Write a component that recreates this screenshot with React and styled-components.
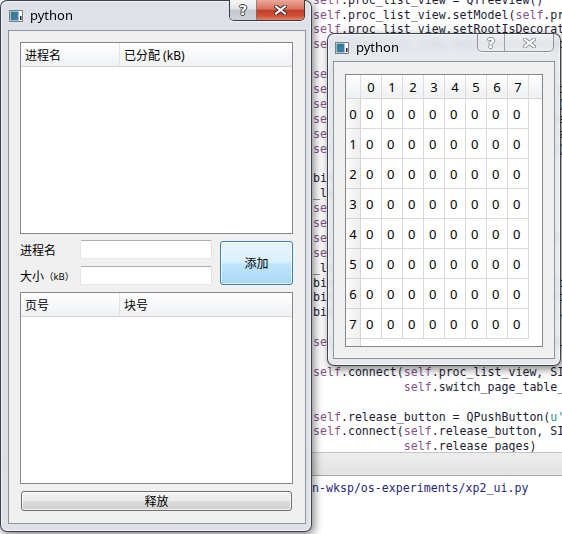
import React from "react";
import styled, { createGlobalStyle } from "styled-components";

const GlobalStyle = createGlobalStyle`
  *, *::before, *::after { box-sizing: border-box; }
  html, body { margin: 0; padding: 0; }
  body {
    width: 562px;
    height: 534px;
    overflow: hidden;
    background: #fff;
    font-family: "Noto Sans", "Noto Sans CJK SC", sans-serif;
  }
`;

const Desktop = styled.div`
  position: relative;
  width: 562px;
  height: 534px;
  overflow: hidden;
  background: #fff;
`;

/* ---------- editor behind the windows ---------- */

const Editor = styled.div`
  display: flex;
  flex-direction: column;
  height: 100%;
  font-family: "DejaVu Sans Mono", "Liberation Mono", monospace;
  font-size: 11.6px;
  color: #1c1c34;
`;

const CodeArea = styled.div`
  height: 452px;
  overflow: hidden;
  background: #fff;
`;

const CodeLines = styled.div`
  margin-top: -7.4px;
  padding-left: 313px;
`;

const Line = styled.div`
  height: 14.9px;
  line-height: 14.9px;
  white-space: pre;
`;

const Self = styled.span`
  color: #86548c;
`;

const Str = styled.span`
  color: #1f8f8c;
`;

const StatusBar = styled.div`
  height: 24px;
  background: linear-gradient(#ededed, #e3e3e3);
  border-top: 1px solid #c4c4c4;
  border-bottom: 1px solid #a6a6a6;
`;

const PathPane = styled.div`
  flex: 1;
  padding: 5px 0 0 312px;
  line-height: 15px;
  color: #26267c;
  white-space: pre;
  background: #fff;
`;

const CODE = [
  "self.proc_list_view = QTreeView()",
  "self.proc_list_view.setModel(self.proc_list_model)",
  "self.proc_list_view.setRootIsDecorated(False)",
  "self.proc_list_view.setItemsExpandable(False)",
  "",
  "self.page_table_view = QTableView()",
  "self.page_table_view.setModel(self.page_table_model)",
  "self.page_table_view.verticalHeader().setDefaultSectionSize(30)",
  "self.page_table_view.horizontalHeader().setDefaultSectionSize(21)",
  "self.page_table_view.setEditTriggers(QAbstractItemView.NoEditTriggers)",
  "self.page_table_view.setWindowTitle('python')",
  "",
  "bind_layout = QGridLayout()",
  "_layout = QHBoxLayout()",
  "self.name_edit = QLineEdit()",
  "self.size_edit = QLineEdit()",
  "self.add_button = QPushButton(u'添加')",
  "self.page_list_view = QTreeView()",
  "_layout.addWidget(self.add_button)",
  "bind_layout.addWidget(self.name_edit, 0, 1)",
  "bind_layout.addWidget(self.size_edit, 1, 1)",
  "bind_layout.addLayout(_layout, 0, 2, 2, 1)",
  "",
  "self.connect(self.add_button, SIGNAL('clicked()'), self.add_proc)",
  "",
  "self.connect(self.proc_list_view, SIGNAL('clicked(QModelIndex)'),",
  "             self.switch_page_table_view)",
  "",
  "self.release_button = QPushButton(u'释放')",
  "self.connect(self.release_button, SIGNAL('clicked()'),",
  "             self.release_pages)",
  "",
];

function renderCode(text) {
  return text.split(/(self|u'[^']*')/).map((part, i) => {
    if (part === "self") return <Self key={i}>self</Self>;
    if (part.startsWith("u'")) return <Str key={i}>{part}</Str>;
    return part;
  });
}

/* ---------- windows ---------- */

const Window = styled.div`
  position: absolute;
  left: ${(p) => p.$x}px;
  top: ${(p) => p.$y}px;
  width: ${(p) => p.$w}px;
  height: ${(p) => p.$h}px;
  display: flex;
  flex-direction: column;
  padding: 0 ${(p) => p.$pr}px ${(p) => p.$pb}px ${(p) => p.$pl}px;
  border: 1px solid rgba(34, 38, 44, 0.85);
  border-radius: 7px;
  background: ${(p) =>
    p.$active ? "rgba(218, 223, 230, 0.9)" : "rgba(226, 229, 234, 0.86)"};
  backdrop-filter: blur(3px);
  box-shadow: inset 0 0 0 1px rgba(255, 255, 255, 0.55),
    2px 3px 10px rgba(0, 0, 0, 0.5);
  font-family: "Noto Sans", "Noto Sans CJK SC", sans-serif;
  color: #000;
`;

const TitleBar = styled.div`
  height: ${(p) => p.$h}px;
  flex: none;
  display: flex;
  align-items: center;
`;

const AppIcon = styled.svg`
  flex: none;
  margin-left: ${(p) => p.$ml}px;
  margin-right: 7px;
`;

const TitleText = styled.span`
  font-size: 13px;
  line-height: 1;
  color: #000;
`;

const Caption = styled.div`
  display: flex;
  align-self: flex-start;
  margin: ${(p) => p.$mt}px 1px 0 auto;
  height: ${(p) => p.$h}px;
  border: 1px solid ${(p) => (p.$active ? "#3b3b3f" : "rgba(110, 116, 124, 0.75)")};
  border-top: none;
  border-radius: 0 0 5px 5px;
  overflow: hidden;
  box-shadow: 0 1px 0 rgba(255, 255, 255, 0.6);
`;

const CapButton = styled.div`
  width: ${(p) => p.$w}px;
  display: flex;
  align-items: center;
  justify-content: center;
  background: ${(p) =>
    p.$kind === "close"
      ? "linear-gradient(#eaa99b 0%, #d9725d 45%, #c23f29 52%, #cf5238 80%, #e38466 100%)"
      : p.$kind === "help"
      ? "linear-gradient(#f5f6f7 0%, #e1e4e8 45%, #c3c9cf 52%, #cdd3d9 100%)"
      : "rgba(255, 255, 255, 0.18)"};
  & + & {
    border-left: 1px solid ${(p) => (p.$dim ? "rgba(110, 116, 124, 0.6)" : "#4a4a4e")};
  }
`;

const HelpGlyph = styled.span`
  font-family: "DejaVu Sans", sans-serif;
  font-weight: bold;
  font-size: 14px;
  line-height: 1;
  color: #fff;
  text-shadow: 1px 0 ${(p) => p.$c}, -1px 0 ${(p) => p.$c}, 0 1px ${(p) => p.$c},
    0 -1px ${(p) => p.$c};
`;

const Client = styled.div`
  flex: 1;
  display: flex;
  flex-direction: column;
  background: #f0f0f0;
  border: 1px solid #8f949b;
  padding: ${(p) => p.$pad};
`;

function WinIcon({ ml }) {
  return (
    <AppIcon $ml={ml} width="14" height="12" viewBox="0 0 14 12">
      <defs>
        <linearGradient id="wi" x1="0" y1="0" x2="1" y2="1">
          <stop offset="0" stopColor="#2d7f86" />
          <stop offset="1" stopColor="#4a7bb8" />
        </linearGradient>
      </defs>
      <rect x="0.5" y="0.5" width="13" height="11" fill="#fff" stroke="#7b8088" />
      <rect x="1.5" y="1.5" width="8" height="9" fill="url(#wi)" />
      <rect x="11" y="6" width="1.5" height="4" fill="#222" />
    </AppIcon>
  );
}

function CloseGlyph({ dim }) {
  const d = "M2 1.5 L11 8.5 M11 1.5 L2 8.5";
  return (
    <svg width="13" height="10" viewBox="0 0 13 10">
      <path d={d} stroke={dim ? "#8c9197" : "#3d2b29"} strokeWidth="4" strokeLinecap="square" />
      <path d={d} stroke="#fff" strokeWidth="2" strokeLinecap="square" />
    </svg>
  );
}

/* ---------- list views / form ---------- */

const ListView = styled.div`
  flex: 1;
  display: flex;
  flex-direction: column;
  background: #fff;
  border: 1px solid #828790;
`;

const HeaderRow = styled.div`
  display: flex;
  height: 24px;
  border-bottom: 1px solid #d5d5d5;
  background: linear-gradient(#ffffff, #f7f8fa 50%, #f0f1f3);
`;

const HeaderCell = styled.div`
  width: ${(p) => (p.$w ? `${p.$w}px` : "auto")};
  flex: ${(p) => (p.$w ? "none" : "1")};
  display: flex;
  align-items: center;
  padding-left: 4px;
  font-size: 12px;
  border-right: ${(p) => (p.$w ? "1px solid #e2e3e6" : "none")};
`;

const Form = styled.div`
  display: grid;
  grid-template-columns: 60px 132px 1fr;
  grid-template-rows: 19px 19px;
  row-gap: 7px;
  margin: 6px 0 7px;
`;

const Label = styled.div`
  display: flex;
  align-items: center;
  font-size: 12px;
  white-space: nowrap;
`;

const Small = styled.span`
  font-size: 9.5px;
`;

const TextInput = styled.div`
  background: #fff;
  border: 1px solid;
  border-color: #abadb3 #dbdfe6 #e3e9ef #e2e3ea;
  border-radius: 2px;
`;

const AddButton = styled.div`
  grid-column: 3;
  grid-row: 1 / span 2;
  margin: 1px 0 0 8px;
  display: flex;
  align-items: center;
  justify-content: center;
  font-size: 12px;
  border: 1px solid #3c7fb1;
  border-radius: 3px;
  background: linear-gradient(#eaf6fd 0%, #d9f0fc 48%, #bee6fd 52%, #a7d9f5 100%);
  box-shadow: inset 0 0 0 1px rgba(255, 255, 255, 0.7);
`;

const ReleaseButton = styled.div`
  height: 20px;
  margin: 7px 1px 0;
  display: flex;
  align-items: center;
  justify-content: center;
  font-size: 12px;
  border: 1px solid #707070;
  border-radius: 3px;
  background: linear-gradient(#f2f2f2 0%, #ebebeb 48%, #dddddd 52%, #cfcfcf 100%);
  box-shadow: inset 0 0 0 1px rgba(255, 255, 255, 0.75);
`;

/* ---------- table ---------- */

const Table = styled.div`
  width: 198px;
  height: 273px;
  border: 1px solid #828790;
  background: #fff;
  display: grid;
  grid-template-columns: 15px repeat(8, 21px) 1fr;
  grid-template-rows: 24px repeat(8, 30px) 1fr;
  font-size: 13px;
`;

const ColHead = styled.div`
  display: flex;
  align-items: center;
  justify-content: center;
  background: linear-gradient(#ffffff, #f6f7f9 50%, #eff0f2);
  border-bottom: 1px solid #d5d5d5;
  border-right: ${(p) => (p.$last ? "none" : "1px solid #dcdcdc")};
`;

const RowHead = styled.div`
  display: flex;
  align-items: center;
  justify-content: center;
  background: linear-gradient(90deg, #fafafa, #eeeeee);
  border-right: 1px solid #d5d5d5;
  border-bottom: ${(p) => (p.$last ? "none" : "1px solid #d5d5d5")};
`;

const Cell = styled.div`
  display: flex;
  align-items: center;
  padding-left: 5px;
  border-right: 1px solid #d9d9d9;
  border-bottom: 1px solid #d9d9d9;
`;

const Blank = styled.div`
  grid-column: ${(p) => p.$span || "auto"};
`;

const COLS = [0, 1, 2, 3, 4, 5, 6, 7];

export default function App() {
  return (
    <Desktop>
      <GlobalStyle />

      <Editor>
        <CodeArea>
          <CodeLines>
            {CODE.map((text, i) => (
              <Line key={i}>{renderCode(text)}</Line>
            ))}
          </CodeLines>
        </CodeArea>
        <StatusBar />
        <PathPane>n-wksp/os-experiments/xp2_ui.py</PathPane>
      </Editor>

      {/* main window */}
      <Window $active $x={0} $y={0} $w={312} $h={532} $pl={7} $pr={5} $pb={7}>
        <TitleBar $h={29}>
          <WinIcon ml={1} />
          <TitleText>python</TitleText>
          <Caption $active $mt={-1} $h={21}>
            <CapButton $kind="help" $w={26}>
              <HelpGlyph $c="#3a3a3a">?</HelpGlyph>
            </CapButton>
            <CapButton $kind="close" $w={48}>
              <CloseGlyph />
            </CapButton>
          </Caption>
        </TitleBar>
        <Client $pad="11px 12px 12px 11px">
          <ListView>
            <HeaderRow>
              <HeaderCell $w={99}>进程名</HeaderCell>
              <HeaderCell>已分配 (kB)</HeaderCell>
            </HeaderRow>
          </ListView>

          <Form>
            <Label>进程名</Label>
            <TextInput />
            <AddButton>添加</AddButton>
            <Label>
              大小<Small>（kB）</Small>
            </Label>
            <TextInput />
          </Form>

          <ListView>
            <HeaderRow>
              <HeaderCell $w={99}>页号</HeaderCell>
              <HeaderCell>块号</HeaderCell>
            </HeaderRow>
          </ListView>

          <ReleaseButton>释放</ReleaseButton>
        </Client>
      </Window>

      {/* page table window */}
      <Window $x={327} $y={33} $w={234} $h={333} $pl={5} $pr={5} $pb={7}>
        <TitleBar $h={27}>
          <WinIcon ml={2} />
          <TitleText>python</TitleText>
          <Caption $mt={0} $h={18}>
            <CapButton $w={26} $dim>
              <HelpGlyph $c="#8c9197">?</HelpGlyph>
            </CapButton>
            <CapButton $w={49} $dim>
              <CloseGlyph dim />
            </CapButton>
          </Caption>
        </TitleBar>
        <Client $pad="12px 11px 11px 11px">
          <Table>
            <ColHead />
            {COLS.map((c) => (
              <ColHead key={c}>{c}</ColHead>
            ))}
            <ColHead $last />
            {COLS.map((r) => (
              <React.Fragment key={r}>
                <RowHead>{r}</RowHead>
                {COLS.map((c) => (
                  <Cell key={c}>0</Cell>
                ))}
                <Blank />
              </React.Fragment>
            ))}
            <RowHead $last />
            <Blank $span="span 9" />
          </Table>
        </Client>
      </Window>
    </Desktop>
  );
}
